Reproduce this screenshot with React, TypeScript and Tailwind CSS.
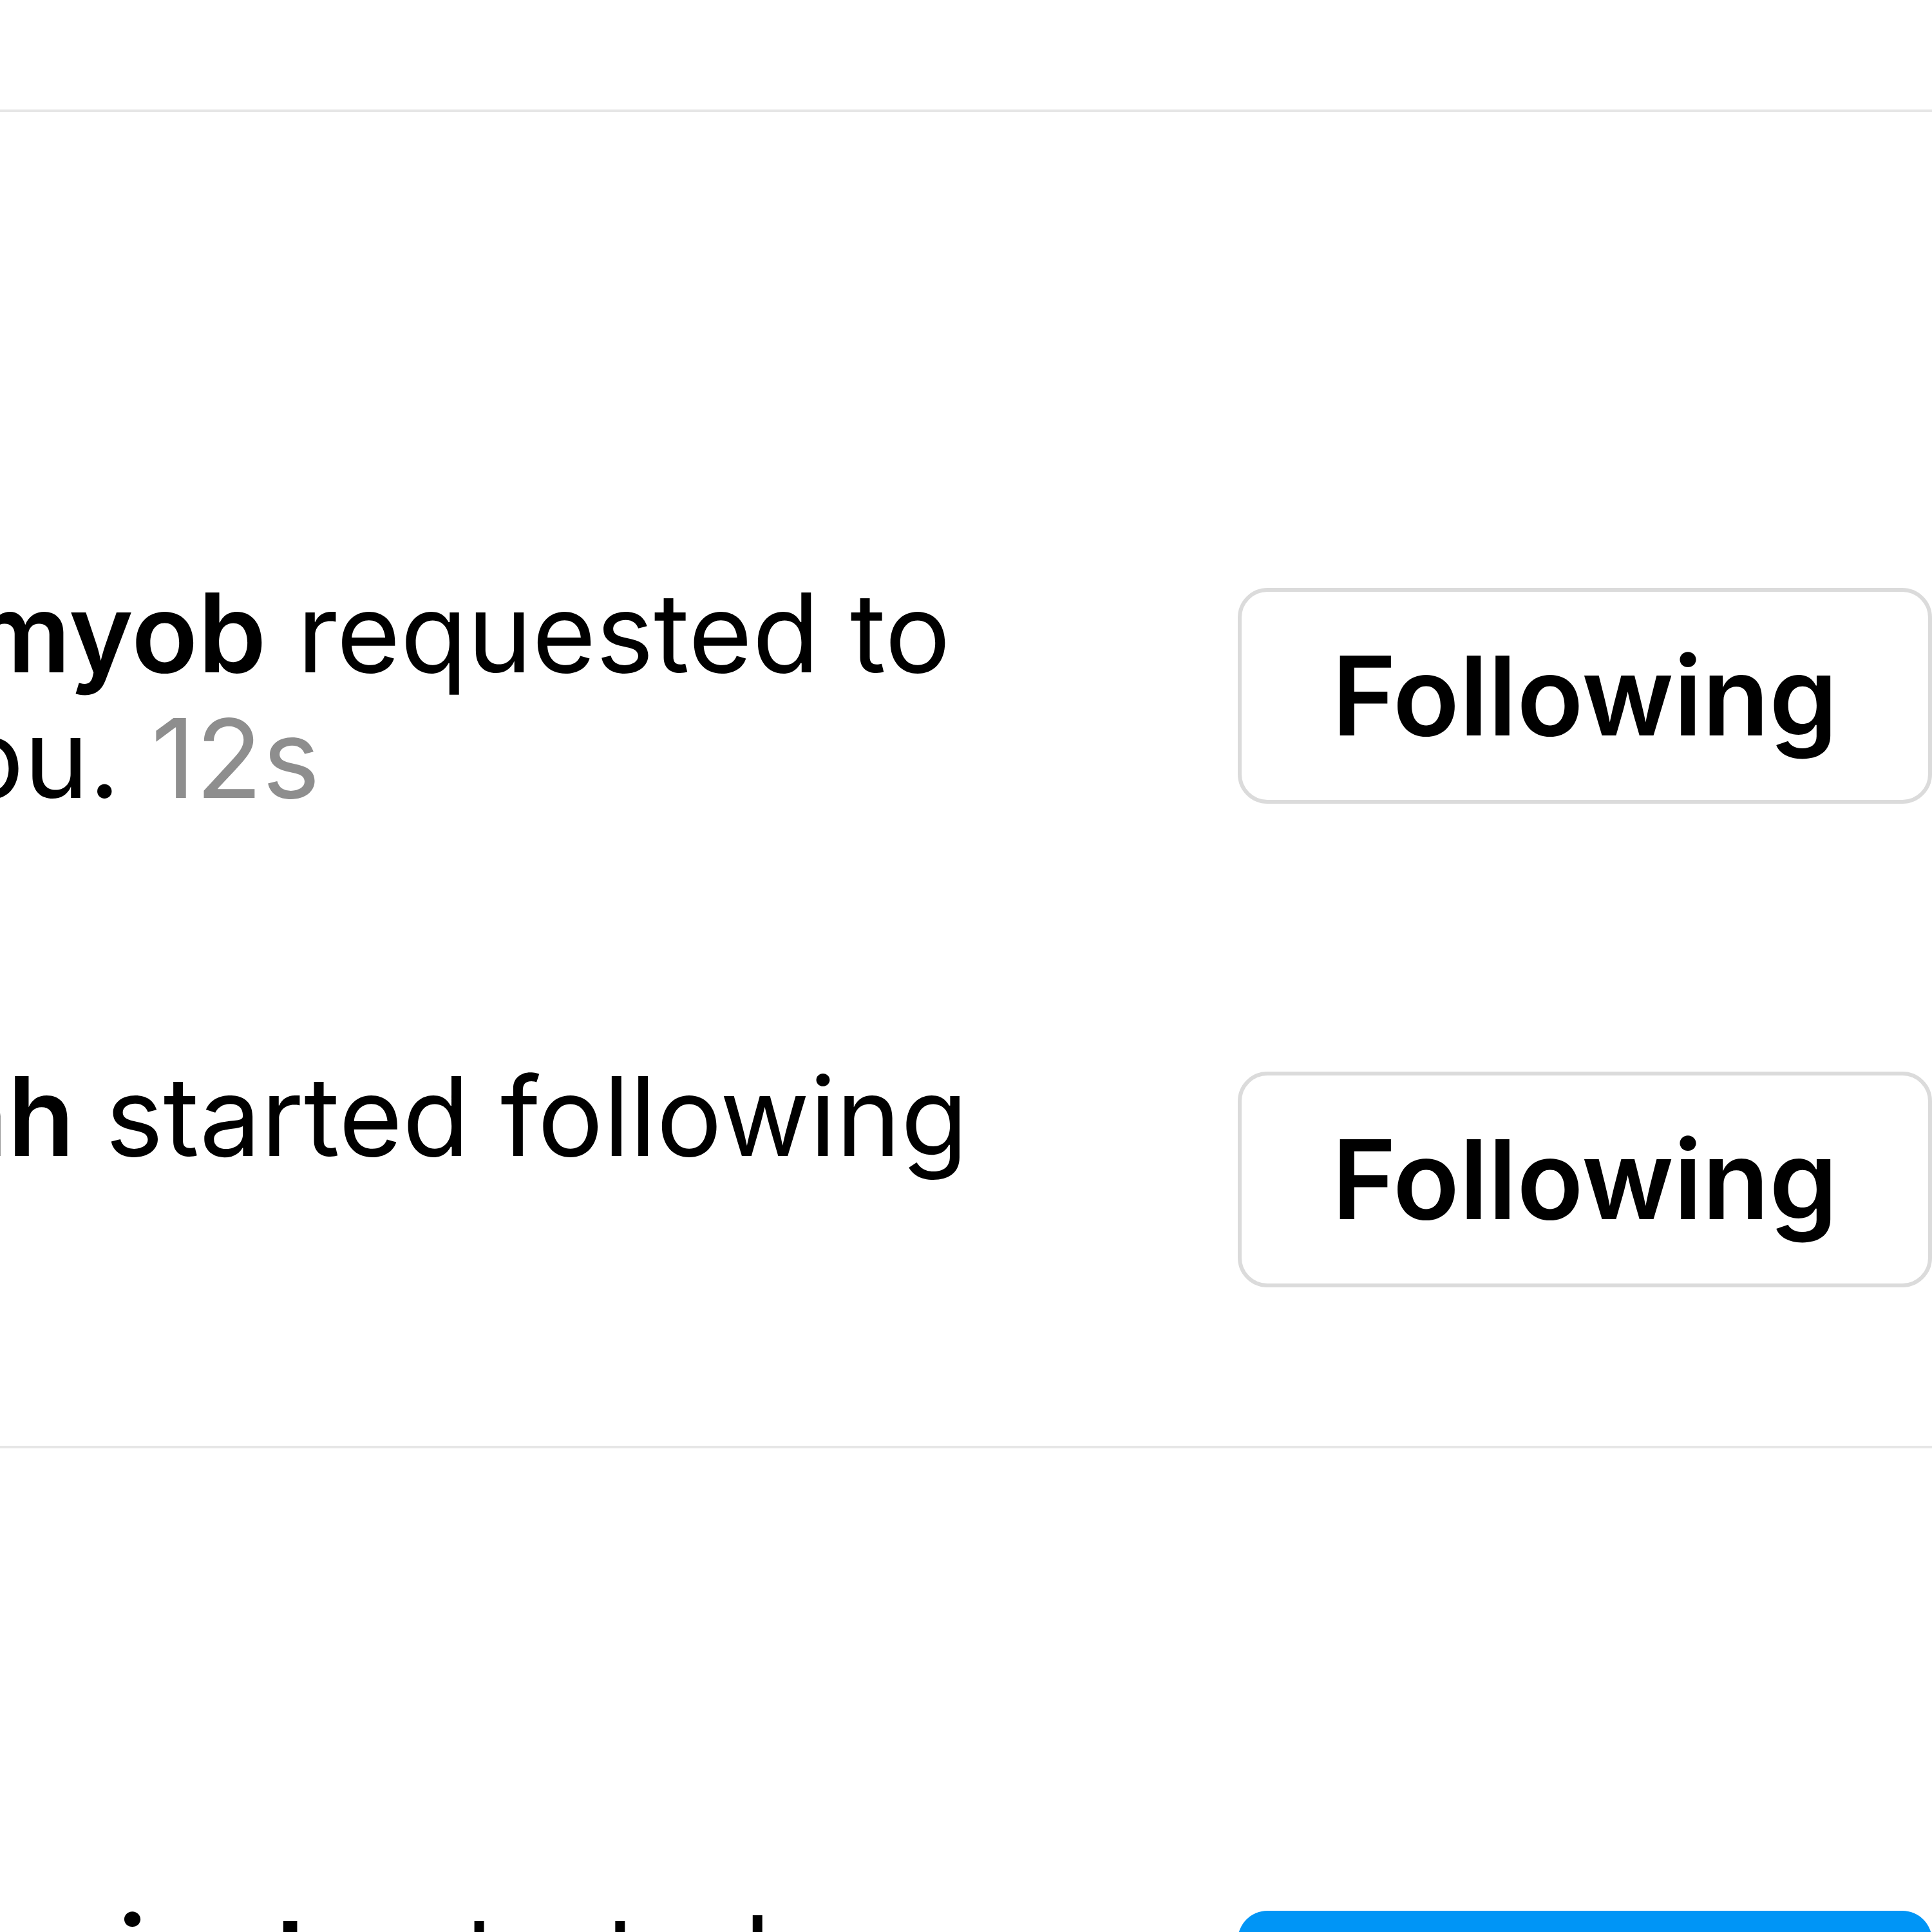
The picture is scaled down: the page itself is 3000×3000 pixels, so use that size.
import React from "react";

function FollowingButton() {
  return (
    <button className="ml-auto flex h-[335px] w-[1078px] shrink-0 items-center justify-center rounded-[46px] border-[6px] border-[#dbdbdb] bg-white text-[170px] font-semibold leading-none text-black">
      Following
    </button>
  );
}

function FollowButton() {
  return (
    <button className="ml-auto flex h-[335px] w-[1078px] shrink-0 items-center justify-center rounded-[46px] bg-[#0095f6] text-[170px] font-semibold leading-none text-white">
      Follow
    </button>
  );
}

function Row({ name, action, time, button }: { name: string; action: string; time: string; button: React.ReactNode }) {
  return (
    <div className="flex items-center">
      <p className="-ml-[685px] min-h-[390px] w-[2463px] shrink-0">
        <span className="font-semibold">{name}</span> {action} <span className="text-[#8e8e8e]">{time}</span>
      </p>
      {button}
    </div>
  );
}

export default function App() {
  return (
    <div className="h-[3000px] w-[3000px] overflow-hidden bg-white font-['Inter',sans-serif] text-[170px] leading-[195px] text-black">
      <div className="h-[170px]" />
      <div className="h-[4px] bg-[#e6e6e6]" />
      <div className="mt-[711px] flex flex-col gap-[361px]">
        <Row name="u.sorry.myob" action="requested to follow you." time="12s" button={<FollowingButton />} />
        <Row name="alex.noah" action="started following you." time="2m" button={<FollowingButton />} />
      </div>
      <div className="mt-[219px] h-[4px] bg-[#e6e6e6]" />
      <div className="mt-[690px]">
        <Row name="bay.moon.insta" action="started following you." time="1d" button={<FollowButton />} />
      </div>
    </div>
  );
}
